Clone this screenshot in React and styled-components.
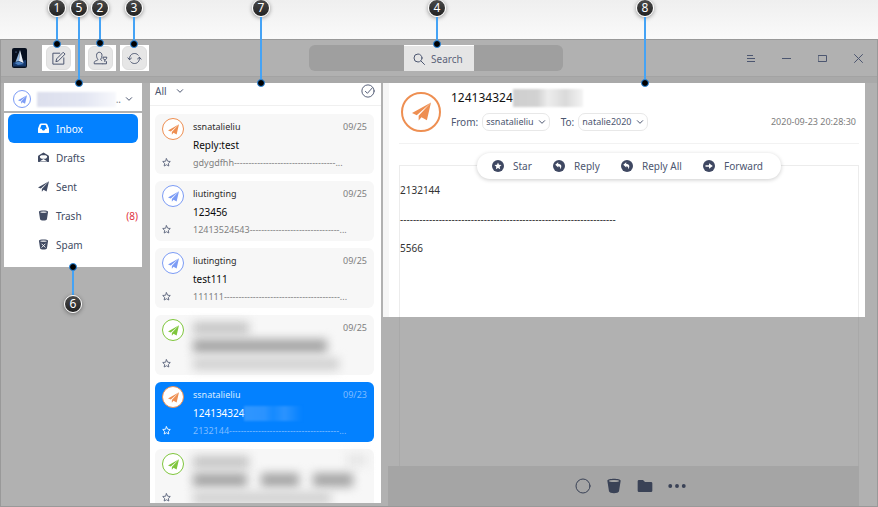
import React from "react";
import styled, { createGlobalStyle, css } from "styled-components";

const Global = createGlobalStyle`
  *, *::before, *::after { box-sizing: border-box; }
  body { margin: 0; }
  body, button, input, select {
    font-family: "Noto Sans", "Open Sans", sans-serif;
    font-size: 10px;
    line-height: 16px;
    color: #4c5670;
  }
  button { border: 0; padding: 0; background: none; cursor: pointer; }
  h1, h2, p, ul { margin: 0; padding: 0; }
  ul { list-style: none; }
  svg { display: block; flex: none; }
`;

const blue = "#0381ff";
const tones = { orange: "#ee8f52", blue: "#7c9cf5", green: "#7fc63c" };

/* ---------- frame ---------- */

const Page = styled.div`
  position: relative;
  display: flex;
  flex-direction: column;
  height: 100vh;
  overflow: hidden;
  background: linear-gradient(#efefef, #fafafa 39px);
`;

const Window = styled.main`
  flex: 1;
  min-height: 0;
  margin-top: 39px;
  display: flex;
  flex-direction: column;
  background: #b1b1b1;
  border: 1px solid #999;
`;

const TitleBar = styled.header`
  display: grid;
  grid-template-columns: 297px minmax(0, 254px) 1fr;
  align-items: center;
  height: 36px;
  padding: 0 1px 0 11px;
`;

const ToolGroup = styled.div`
  display: flex;
  align-items: center;
`;

const Tool = styled.div`
  display: flex;
  align-items: center;
  justify-content: center;
  width: ${(p) => p.$width}px;
  height: 26px;
  margin-left: ${(p) => p.$gap}px;
  background: #fff;
`;

const ToolButton = styled.button`
  display: grid;
  place-items: center;
  width: 25px;
  height: 24px;
  border: 1px solid #dedede;
  border-radius: 6px;
  background: #e6e6e6;
`;

const SearchField = styled.div`
  display: flex;
  justify-content: center;
  height: 26px;
  border-radius: 6px;
  background: #9f9f9f;
`;

const SearchSpot = styled.label`
  display: flex;
  align-items: center;
  gap: 6px;
  width: 70px;
  margin-left: 6px;
  padding-left: 9px;
  border-top: 1px solid #fff;
  background: #e5e5e5;
`;

const SearchInput = styled.input`
  width: 42px;
  padding: 0;
  border: 0;
  outline: 0;
  background: none;
  &::placeholder { color: #5b6379; opacity: 1; }
`;

const WindowControls = styled.div`
  display: flex;
  justify-content: flex-end;
`;

const ControlButton = styled.button`
  display: grid;
  place-items: center;
  width: 36px;
  height: 30px;
`;

const Columns = styled.div`
  flex: 1;
  min-height: 0;
  display: grid;
  grid-template-columns: 138px 231px minmax(0, 1fr);
  column-gap: 8px;
  padding: 6px 0 0 3px;
  border-top: 1px solid #a3a3a3;
  background: linear-gradient(#a9a9a9 6px, #b1b1b1 6px);
`;

/* ---------- sidebar ---------- */

const Sidebar = styled.aside`
  display: flex;
  flex-direction: column;
  gap: 2px;
`;

const Account = styled.button`
  display: flex;
  align-items: center;
  height: 28px;
  padding: 4px 9px 0;
  background: #fff;
  text-align: left;
`;

const AccountName = styled.span`
  width: 80px;
  height: 15px;
  margin-left: 6px;
  background: linear-gradient(90deg, #dcdfed, #e3e6f2 60%, #f7f8fc);
  filter: blur(1px);
`;

const AccountMore = styled.span`
  margin-right: 4px;
  color: #777;
`;

const Nav = styled.nav`
  padding: 1px 4px 8px;
  background: #fff;
`;

const NavItem = styled.a`
  display: flex;
  align-items: center;
  gap: 7px;
  height: 29px;
  padding-left: 30px;
  border-radius: 6px;
  color: ${(p) => (p.$active ? "#fff" : "#414b63")};
  background: ${(p) => (p.$active ? blue : "transparent")};
  text-decoration: none;
`;

const Count = styled.span`
  margin-left: auto;
  color: #e0303c;
`;

/* ---------- message list ---------- */

const ListPanel = styled.section`
  display: flex;
  flex-direction: column;
  min-height: 0;
  margin-bottom: 3px;
  overflow: hidden;
  background: #fff;
`;

const ListHeader = styled.div`
  display: flex;
  align-items: center;
  justify-content: space-between;
  flex: none;
  height: 23px;
  padding: 0 6px 6px 5px;
  border-bottom: 1px solid #f0f0f0;
`;

const FilterButton = styled.button`
  display: flex;
  align-items: center;
  gap: 9px;
`;

const Cards = styled.ul`
  display: flex;
  flex-direction: column;
  gap: 7px;
  padding: 8px 7px 0 5px;
`;

const Card = styled.li`
  display: grid;
  grid-template-columns: 31px minmax(0, 1fr);
  flex: none;
  height: 60px;
  padding: 4px 7px 3px;
  border-radius: 6px;
  background: #f7f7f7;
  --name: #2c2c2c;
  --subject: #0a0a0a;
  --faint: #808080;
  --star: #59627a;
  ${(p) => p.$selected && css`
    background: ${blue};
    --name: #d9ebff;
    --subject: #fff;
    --faint: #7fbcff;
    --star: #fff;
  `}
`;

const CardSide = styled.div`
  display: flex;
  flex-direction: column;
  justify-content: space-between;
  align-items: flex-start;
`;

const StarButton = styled.button`
  padding-bottom: 4px;
`;

const CardText = styled.div`
  display: flex;
  flex-direction: column;
  gap: 2px;
`;

const CardTop = styled.div`
  display: flex;
  justify-content: space-between;
  padding-top: 1px;
  font-size: 9px;
  color: var(--name);
`;

const CardDate = styled.time`
  color: var(--faint);
`;

const Subject = styled.h2`
  display: flex;
  align-items: center;
  font-size: 10px;
  font-weight: 400;
  line-height: 16px;
  color: var(--subject);
`;

const Preview = styled.p`
  white-space: nowrap;
  font-size: 9px;
  line-height: 16px;
  color: var(--faint);
`;

const SmudgeRow = styled.span`
  display: flex;
  align-items: center;
  gap: 14px;
  height: 16px;
`;

const Smudge = styled.span`
  flex: none;
  width: ${(p) => p.$width}px;
  height: ${(p) => p.$height || 12}px;
  background: ${(p) => p.$color || "#b5b5b5"};
  filter: blur(5px);
`;

const SubjectSmudge = styled.span`
  width: 58px;
  height: 15px;
  background: linear-gradient(90deg, #2f96ff, #2b93ff 35%, #158aff 50%, #2b93ff 70%, ${blue});
  filter: blur(1px);
`;

const AvatarRing = styled.span`
  display: grid;
  place-items: center;
  flex: none;
  width: ${(p) => p.$size}px;
  height: ${(p) => p.$size}px;
  border: ${(p) => (p.$size > 30 ? 2 : 1)}px solid ${(p) => tones[p.$tone]};
  border-radius: 50%;
  background: #fff;
  color: ${(p) => tones[p.$tone]};
`;

/* ---------- reader ---------- */

const Reader = styled.article`
  display: flex;
  flex-direction: column;
  min-width: 0;
  margin-left: -6px;
`;

const Paper = styled.div`
  display: flex;
  flex-direction: column;
  height: 234px;
  flex: none;
  margin-right: 12px;
  padding: 0 6px 0 16px;
  background: linear-gradient(90deg, #f6f6f6 6px, #fff 6px);
`;

const MailHeader = styled.header`
  display: flex;
  align-items: center;
  gap: 10px;
  height: 61px;
  padding: 0 3px 3px 2px;
  border-bottom: 1px solid #f2f2f2;
`;

const MailInfo = styled.div`
  display: flex;
  flex-direction: column;
  flex: 1;
  gap: 6px;
  padding-bottom: 3px;
`;

const MailTitle = styled.h1`
  display: flex;
  align-items: center;
  font-size: 12px;
  font-weight: 400;
  line-height: 18px;
  color: #111;
`;

const TitleSmudge = styled.span`
  width: 70px;
  height: 18px;
  background: linear-gradient(90deg, #cfcfcf, #d2d2d2 35%, #ededed 50%, #dadada 75%, #f4f4f4);
  filter: blur(1px);
`;

const Fields = styled.div`
  display: flex;
  align-items: center;
`;

const AddressButton = styled.button`
  display: flex;
  align-items: center;
  gap: 4px;
  height: 18px;
  margin: 0 11px 0 4px;
  padding: 0 3px;
  border: 1px solid #e8e8e8;
  border-radius: 7px;
  font-size: 9px;
`;

const SentAt = styled.time`
  margin-left: auto;
  font-size: 9px;
  color: #7c7c7c;
`;

const ActionBar = styled.div`
  position: relative;
  z-index: 1;
  display: flex;
  align-items: center;
  justify-content: space-between;
  align-self: center;
  width: 304px;
  height: 26px;
  margin: 9px 0 -14px;
  padding: 0 18px 0 15px;
  border-radius: 13px;
  background: #fff;
  box-shadow: 0 1px 4px rgba(0, 0, 0, 0.2);
`;

const Action = styled.button`
  display: flex;
  align-items: center;
  gap: 9px;
`;

const MailBody = styled.div`
  flex: 1;
  display: flex;
  flex-direction: column;
  gap: 13px;
  padding: 16px 0;
  border: solid #ececec;
  border-width: 1px 1px 0;
  color: #333;
`;

const Dimmed = styled.div`
  flex: 1;
  margin: 0 18px 0 16px;
  border: solid #a9a9a9;
  border-width: 0 1px;
`;

const Footer = styled.footer`
  display: flex;
  align-items: center;
  justify-content: center;
  gap: 15px;
  height: 40px;
  margin: 0 18px 0 5px;
  padding-left: 13px;
  background: #a5a5a5;
`;

const FooterButton = styled.button`
  color: #3a4256;
`;

/* ---------- callouts ---------- */

const Callout = styled.div`
  position: absolute;
  z-index: 5;
  left: ${(p) => p.$x - 10}px;
  top: ${(p) => p.$y}px;
  display: flex;
  flex-direction: ${(p) => (p.$up ? "column-reverse" : "column")};
  align-items: center;
  width: 20px;
  height: ${(p) => p.$length}px;
  pointer-events: none;
`;

const CalloutBadge = styled.span`
  display: grid;
  place-items: center;
  flex: none;
  width: 18px;
  height: 18px;
  border: 1px solid #fff;
  border-radius: 50%;
  background: linear-gradient(#4a4a4a, #222);
  box-shadow: 0 1px 4px rgba(0, 0, 0, 0.4);
  color: #fff;
  font-size: 12px;
`;

const CalloutLine = styled.span`
  flex: 1;
  width: 2px;
  background: #45a3f5;
`;

const CalloutDot = styled.span`
  flex: none;
  width: 8px;
  height: 8px;
  border: 1px solid #2b8ce6;
  border-radius: 50%;
  background: #000;
`;

/* ---------- icons ---------- */

const Icon = ({ size = 11, box = 24, children, ...rest }) => (
  <svg width={size} height={size} viewBox={`0 0 ${box} ${box}`} fill="none" stroke="currentColor"
    strokeWidth="1.6" strokeLinecap="round" strokeLinejoin="round" aria-hidden="true" {...rest}>
    {children}
  </svg>
);

const Plane = ({ size }) => (
  <Icon size={size} stroke="none" fill="currentColor">
    <path d="M24 .5 0 14l6 2.600L20 4.500z" />
    <path d="M24 .5 8.400 17.500v6L12 19.200l6.800 3.800z" />
  </Icon>
);

const Chevron = ({ size = 8 }) => (
  <Icon size={size} strokeWidth="3"><path d="m4 8 8 8 8-8" /></Icon>
);

const StarOutline = () => (
  <Icon size={9} strokeWidth="2.4" stroke="var(--star)">
    <path d="m12 2 3.1 6.5 7 .9-5.1 5 1.2 7L12 18l-6.2 3.4 1.2-7-5.1-5 7-.9z" />
  </Icon>
);

const Logo = () => (
  <svg width="15" height="20" viewBox="0 0 15 20" aria-hidden="true">
    <rect width="15" height="20" rx="2" fill="#07101f" />
    <path d="M1 14.5 14 12v6.500H1z" fill="#16386b" />
    <path d="M8 2 3.500 14 7 13z" fill="#8fb4dc" />
    <path d="M8 2 7 13l4.500 2z" fill="#e8eef6" />
    <path d="m2.500 15 4.500-1.500 5 2.500-6 1z" fill="#4a7fc0" />
    <circle cx="4" cy="4" r="0.5" fill="#9ec4ff" />
  </svg>
);

const Compose = () => (
  <Icon size={15}>
    <path d="M14 3.500H3V21h17.500V11" />
    <path d="m8 16.500 1-4L19.500 2l3 3L12 15.500z" />
  </Icon>
);

const Contacts = () => (
  <Icon size={15}>
    <path d="M15.500 20.500H2v-2.200c0-1.600 1.400-2.200 3.200-2.800 1.800-.5 2.600-1 2.600-2.300C6.300 11.500 5.700 9.600 5.700 7c0-3 1.700-5 4.300-5s4.400 2 4.400 5c0 2.600-.7 4.500-2.200 6.200 0 1 .6 1.500 1.800 2" />
    <path d="M16 20.500h5.500v-3.500M16 10.500c0 2.500 1.500 3.500 3 3.500s3-1 3-3.500zM19 14v3" />
  </Icon>
);

const Refresh = () => (
  <Icon size={15}>
    <path d="M4 13.500C3.500 8 7 4 12 4c2.700 0 4.600 1 6 2.700M20 10.500C20.500 16 17 20 12 20c-2.700 0-4.600-1-6-2.700" />
    <path d="m1.500 11 2.500 3 3-2.500M22.500 13 20 10l-3 2.500" />
  </Icon>
);

const Search = () => (
  <Icon size={12} strokeWidth="2"><circle cx="10" cy="10" r="8" /><path d="m16 16 7 7" /></Icon>
);

const InboxIcon = () => (
  <Icon fill="currentColor" stroke="none">
    <path fillRule="evenodd" d="M7 1h10a4 4 0 0 1 3.600 2.500L24 12v8a2 2 0 0 1-2 2H2a2 2 0 0 1-2-2v-8l3.400-8.500A4 4 0 0 1 7 1zm.5 3.500L4.500 12.500H8c.5 2.500 2 4 4 4s3.500-1.500 4-4h3.500L16.500 4.500z" />
  </Icon>
);

const DraftsIcon = () => (
  <Icon fill="currentColor" stroke="none">
    <path fillRule="evenodd" d="M12 1 22 7a4 4 0 0 1 2 3v10a2 2 0 0 1-2 2H2a2 2 0 0 1-2-2V10a4 4 0 0 1 2-3zM7.500 7 4 9.500l1 3.500 3 1.500h8l3-1.500 1-3.500L16.500 7zM3.500 20.500h17L12 15.500z" />
  </Icon>
);

const TrashIcon = ({ size = 11, spam, hole = "#fff" }) => (
  <Icon size={size} fill="currentColor" stroke="none">
    <path d="M2 4c0-4 20-4 20 0l-2.500 16c-.5 4-14.500 4-15 0z" />
    <ellipse cx="12" cy="4.500" rx="7.500" ry="1.500" fill={hole} />
    {spam && <path d="m8.500 11 7 7m0-7-7 7" stroke={hole} strokeWidth="2" />}
  </Icon>
);

const CheckCircle = () => (
  <Icon size={14}><circle cx="12" cy="12" r="10.500" /><path d="m7.500 12.500 3.500 3.500 8-9" /></Icon>
);

const Disc = ({ children }) => (
  <Icon size={12} stroke="none">
    <circle cx="12" cy="12" r="12" fill="#3f4862" />
    {children}
  </Icon>
);

const StarDisc = () => (
  <Disc><path fill="#fff" d="m12 5 2 4.500 5 .6-3.700 3.300 1 4.900L12 15.900l-4.300 2.400 1-4.900L5 10.100l5-.6z" /></Disc>
);
const ReplyDisc = () => (
  <Disc><path fill="#fff" d="m4.500 9.500 6-5v3.300c6 0 8.500 4.400 3.500 10.700 1.200-4.500-.5-6-3.500-6v2.500z" /></Disc>
);
const ForwardDisc = () => (
  <Disc><path fill="#fff" d="M5 10.500h7V6.500l7.500 5.500-7.500 5.500v-4H5z" /></Disc>
);

/* ---------- data ---------- */

const folders = [
  { label: "Inbox", icon: <InboxIcon />, active: true },
  { label: "Drafts", icon: <DraftsIcon /> },
  { label: "Sent", icon: <Plane size={11} /> },
  { label: "Trash", icon: <TrashIcon />, count: "(8)" },
  { label: "Spam", icon: <TrashIcon spam /> },
];

const excerpt = (text, dashes) => `${text}${"-".repeat(dashes)}...`;

const messages = [
  { name: "ssnatalieliu", subject: "Reply:test", preview: excerpt("gdygdfhh", 35), date: "09/25", tone: "orange" },
  { name: "liutingting", subject: "123456", preview: excerpt("12413524543", 31), date: "09/25", tone: "blue" },
  { name: "liutingting", subject: "test111", preview: excerpt("111111", 40), date: "09/25", tone: "blue" },
  { hidden: [[56], [134], [146]], date: "09/25", tone: "green" },
  { name: "ssnatalieliu", subject: "124134324", preview: excerpt("2132144", 38), date: "09/23", tone: "orange", selected: true },
  { hidden: [[56], [54, 38, 40], [138]], tone: "green" },
];

const actions = [
  ["Star", <StarDisc />],
  ["Reply", <ReplyDisc />],
  ["Reply All", <ReplyDisc />],
  ["Forward", <ForwardDisc />],
];

const callouts = [
  { n: 1, x: 57, y: -1, length: 49 },
  { n: 5, x: 79, y: -1, length: 88 },
  { n: 2, x: 100, y: -1, length: 48 },
  { n: 3, x: 134, y: -1, length: 49 },
  { n: 4, x: 437, y: -1, length: 49 },
  { n: 7, x: 261, y: -1, length: 88 },
  { n: 8, x: 645, y: -1, length: 88 },
  { n: 6, x: 73, y: 263, length: 50, up: true },
];

const Avatar = ({ size, tone, glyph }) => (
  <AvatarRing $size={size} $tone={tone}><Plane size={glyph} /></AvatarRing>
);

const MessageCard = ({ m }) => (
  <Card $selected={m.selected}>
    <CardSide>
      <Avatar size={22} tone={m.tone} glyph={11} />
      <StarButton aria-label="Star message"><StarOutline /></StarButton>
    </CardSide>
    <CardText>
      <CardTop>
        {m.hidden ? (
          <SmudgeRow><Smudge $width={m.hidden[0][0]} $color="#c4c4c4" /></SmudgeRow>
        ) : m.name}
        {m.date ? <CardDate>{m.date}</CardDate> : <Smudge $width={20} $color="#e6e6e6" />}
      </CardTop>
      {m.hidden ? (
        <>
          <SmudgeRow>
            {m.hidden[1].map((w, i) => <Smudge key={i} $width={w} $height={14} $color="#a6a6a6" />)}
          </SmudgeRow>
          <SmudgeRow><Smudge $width={m.hidden[2][0]} $color="#d0d0d0" /></SmudgeRow>
        </>
      ) : (
        <>
          <Subject>
            {m.subject}
            {m.selected && <SubjectSmudge />}
          </Subject>
          <Preview>{m.preview}</Preview>
        </>
      )}
    </CardText>
  </Card>
);

export default function App() {
  return (
    <Page>
      <Global />
      <Window>
        <TitleBar>
          <ToolGroup>
            <Logo />
            <Tool $width={33} $gap={15}><ToolButton aria-label="Compose"><Compose /></ToolButton></Tool>
            <Tool $width={31} $gap={10}><ToolButton aria-label="Contacts"><Contacts /></ToolButton></Tool>
            <Tool $width={29} $gap={4}><ToolButton aria-label="Refresh"><Refresh /></ToolButton></Tool>
          </ToolGroup>
          <SearchField>
            <SearchSpot>
              <Search />
              <SearchInput type="text" aria-label="Search" placeholder="Search" />
            </SearchSpot>
          </SearchField>
          <WindowControls>
            <ControlButton aria-label="Menu">
              <Icon size={9} box={9} strokeWidth="1" strokeLinecap="butt"><path d="M1 1.500h6M1 4.500h8M1 7.500h8" /></Icon>
            </ControlButton>
            <ControlButton aria-label="Minimize">
              <Icon size={9} box={9} strokeWidth="1" strokeLinecap="butt"><path d="M0 4.500h9" /></Icon>
            </ControlButton>
            <ControlButton aria-label="Maximize">
              <Icon size={9} box={9} strokeWidth="1" strokeLinejoin="miter"><path d="M.5 1.500h8v6h-8z" /></Icon>
            </ControlButton>
            <ControlButton aria-label="Close">
              <Icon size={9} box={9} strokeWidth="1"><path d="m.5.5 8 8m0-8-8 8" /></Icon>
            </ControlButton>
          </WindowControls>
        </TitleBar>

        <Columns>
          <Sidebar>
            <Account aria-label="Account">
              <Avatar size={18} tone="blue" glyph={9} />
              <AccountName />
              <AccountMore>..</AccountMore>
              <Chevron />
            </Account>
            <Nav>
              {folders.map((f) => (
                <NavItem key={f.label} href="#" $active={f.active}>
                  {f.icon}
                  {f.label}
                  {f.count && <Count>{f.count}</Count>}
                </NavItem>
              ))}
            </Nav>
          </Sidebar>

          <ListPanel>
            <ListHeader>
              <FilterButton>All <Chevron /></FilterButton>
              <button aria-label="Select messages"><CheckCircle /></button>
            </ListHeader>
            <Cards>
              {messages.map((m, i) => <MessageCard key={i} m={m} />)}
            </Cards>
          </ListPanel>

          <Reader>
            <Paper>
              <MailHeader>
                <Avatar size={40} tone="orange" glyph={19} />
                <MailInfo>
                  <MailTitle>124134324<TitleSmudge /></MailTitle>
                  <Fields>
                    From: <AddressButton>ssnatalieliu <Chevron /></AddressButton>
                    To: <AddressButton>natalie2020 <Chevron /></AddressButton>
                    <SentAt>2020-09-23 20:28:30</SentAt>
                  </Fields>
                </MailInfo>
              </MailHeader>
              <ActionBar>
                {actions.map(([label, icon]) => <Action key={label}>{icon}{label}</Action>)}
              </ActionBar>
              <MailBody>
                <p>2132144</p>
                <p>{"-".repeat(67)}</p>
                <p>5566</p>
              </MailBody>
            </Paper>
            <Dimmed />
            <Footer>
              <FooterButton aria-label="Mark"><Icon size={16} strokeWidth="1.500"><circle cx="12" cy="12" r="10.500" /></Icon></FooterButton>
              <FooterButton aria-label="Delete"><TrashIcon size={16} hole="#a5a5a5" /></FooterButton>
              <FooterButton aria-label="Move to folder">
                <Icon size={16} stroke="none" fill="currentColor">
                  <path d="M1 5a2 2 0 0 1 2-2h6l3 3h9a2 2 0 0 1 2 2V19a2 2 0 0 1-2 2H3a2 2 0 0 1-2-2z" />
                </Icon>
              </FooterButton>
              <FooterButton aria-label="More">
                <Icon size={18} stroke="none" fill="currentColor">
                  <circle cx="3" cy="12" r="2.600" /><circle cx="12" cy="12" r="2.600" /><circle cx="21" cy="12" r="2.600" />
                </Icon>
              </FooterButton>
            </Footer>
          </Reader>
        </Columns>
      </Window>

      {callouts.map((c) => (
        <Callout key={c.n} $x={c.x} $y={c.y} $length={c.length} $up={c.up}>
          <CalloutBadge>{c.n}</CalloutBadge>
          <CalloutLine />
          <CalloutDot />
        </Callout>
      ))}
    </Page>
  );
}
